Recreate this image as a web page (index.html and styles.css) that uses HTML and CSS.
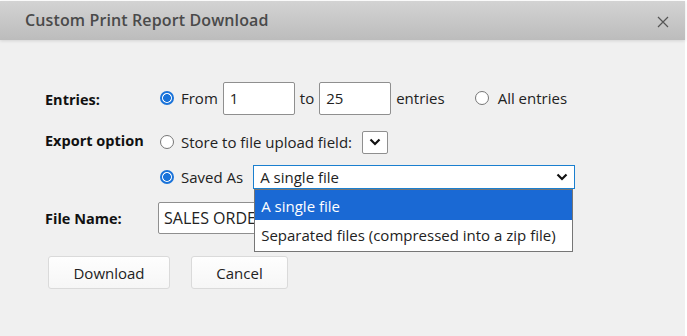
FILE: index.html
```html
<!DOCTYPE html>
<html lang="en">
<head>
  <meta charset="UTF-8" />
  <title>Custom Print Report Download</title>
  <link rel="stylesheet" href="styles.css">
</head>
<body>
  <div class="dialog">
    <header class="dialog-head">
      <span class="dialog-title">Custom Print Report Download</span>
      <svg class="close" width="12" height="12" viewBox="0 0 12 12"><path d="M1 1L11 11M11 1L1 11" stroke="#555" stroke-width="1.2" fill="none"/></svg>
    </header>

    <div class="dialog-body">
      <div class="form">
        <div class="label">Entries:</div>
        <div class="field row1">
          <span class="radio checked"></span>
          <span class="txt">From</span>
          <input class="num" type="text" value="1">
          <span class="txt">to</span>
          <input class="num" type="text" value="25">
          <span class="txt">entries</span>
          <span class="radio all"></span>
          <span class="txt">All entries</span>
        </div>

        <div class="label">Export option</div>
        <div class="field row2">
          <span class="radio"></span>
          <span class="txt">Store to file upload field:</span>
          <span class="mini-select">
            <svg width="12" height="8" viewBox="0 0 12 8"><path d="M1.5 1.5L6 6L10.5 1.5" stroke="#111" stroke-width="2.2" fill="none"/></svg>
          </span>
        </div>

        <div class="label"></div>
        <div class="field row3">
          <span class="radio checked"></span>
          <span class="txt">Saved As</span>
          <div class="select-wrap">
            <div class="select">
              <span>A single file</span>
              <svg width="12" height="8" viewBox="0 0 12 8"><path d="M1.5 1.5L6 6L10.5 1.5" stroke="#111" stroke-width="2.2" fill="none"/></svg>
            </div>
            <ul class="options">
              <li class="sel">A single file</li>
              <li>Separated files (compressed into a zip file)</li>
            </ul>
          </div>
        </div>

        <div class="label">File Name:</div>
        <div class="field row4">
          <input class="fname" type="text" value="SALES ORDER">
        </div>
      </div>

      <div class="buttons">
        <button class="btn dl">Download</button>
        <button class="btn cancel">Cancel</button>
      </div>
    </div>
  </div>
</body>
</html>
```

FILE: styles.css
```css
* { box-sizing: border-box; margin: 0; padding: 0; }
body { font-family: "Open Sans", sans-serif; background: #fff; color: #222; width: 687px; height: 336px; overflow: hidden; }
.dialog { background: #f0f0f0; height: 335px; margin-top: 1px; margin-right: 2px; }
.dialog-head { height: 39px; display: flex; align-items: center; justify-content: space-between; padding: 0 16px 0 25px; background: linear-gradient(#d3d3d3, #bcbcbc); box-shadow: 0 1px 3px rgba(0,0,0,0.12); }
.dialog-title { font-size: 16px; font-weight: 600; color: #4a4a4a; margin-top: -2px; letter-spacing: 0.12px; }
.close { margin-top: 2px; }
.dialog-body { padding: 43px 0 0 45px; }
.form { display: grid; grid-template-columns: 113px auto; grid-template-rows: 33px 23px 24px 32px; row-gap: 13px; align-items: center; }
.row1 { margin-bottom: 3px; }
.label { font-size: 14.5px; font-weight: 700; color: #111; }
.field { display: flex; align-items: center; font-size: 15px; color: #222; }
.row2 { margin-top: 3px; }
.radio { width: 14px; height: 14px; border-radius: 50%; border: 1px solid #767676; background: #fff; margin-left: 2px; margin-right: 7px; flex: none; }
.radio.checked { border: 2px solid #1a73d9; background: radial-gradient(circle, #1a73d9 0 3.6px, #fff 4.2px); }
.radio.all { margin-left: 30px; margin-right: 9px; }
.num { width: 72px; height: 33px; border: 1px solid #8f8f8f; border-radius: 2px; background: #fff; font: 15px "Open Sans", sans-serif; color: #222; padding: 0 6px; margin: 0 5px 0 5px; }
.mini-select { width: 26px; height: 23px; border: 1px solid #8f8f8f; border-radius: 2px; background: #fff; margin-left: 10px; display: flex; align-items: center; justify-content: center; }
.select-wrap { position: relative; margin-left: 10px; }
.select { width: 322px; height: 24px; border: 1px solid #1a7fcf; background: #fff; display: flex; align-items: center; justify-content: space-between; padding: 0 6px 0 6px; font-size: 15px; color: #222; }
.options { position: absolute; top: 24px; left: 1px; width: 319px; list-style: none; background: #fff; border: 1px solid #767676; z-index: 5; font-size: 15px; }
.options li { height: 31px; line-height: 31px; padding-left: 6px; color: #222; }
.options li.sel { background: #1a69d4; color: #fff; height: 30px; line-height: 32px; }
.fname { width: 300px; height: 32px; border: 1px solid #8f8f8f; border-radius: 2px; background: #fff; font: 16px "Open Sans", sans-serif; color: #222; padding: 0 5px; }
.buttons { display: flex; gap: 21px; margin: 22px 0 0 3px; }
.btn { height: 33px; border: 1px solid #dadada; border-radius: 3px; background: linear-gradient(#fefefe, #f6f6f6); font: 15px "Open Sans", sans-serif; color: #222; }
.dl { width: 122px; }
.cancel { width: 97px; }
```
